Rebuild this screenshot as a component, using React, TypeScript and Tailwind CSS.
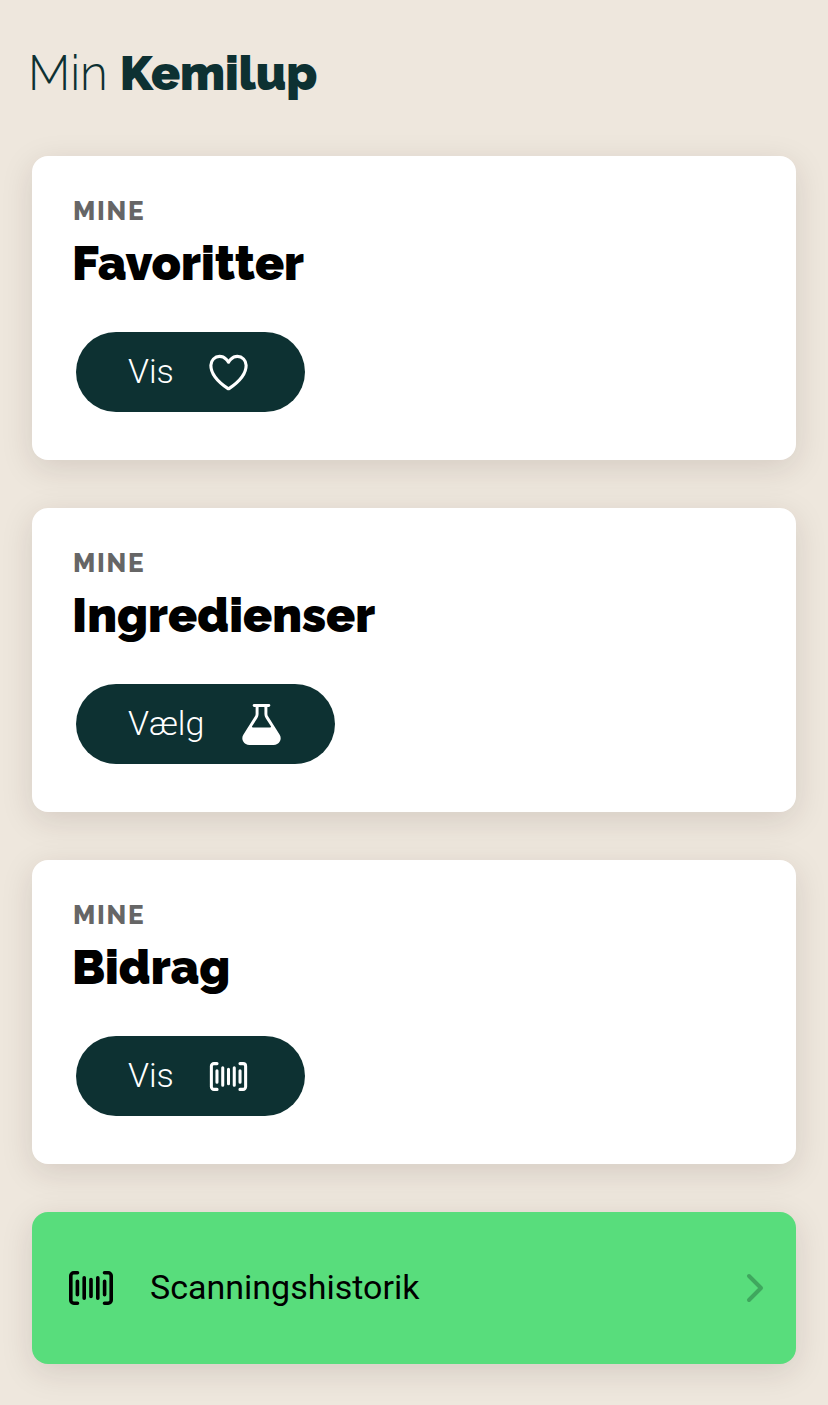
import React from "react";

interface MenuCardProps {
  title: string;
  action: string;
  icon: React.ReactNode;
}

const HeartIcon: React.FC = () => (
  <svg viewBox="0 0 512 512" className="mt-px -mr-[3.5px] -ml-[4.5px] h-[47px] w-[47px]" fill="none" stroke="currentColor" strokeWidth="34" strokeLinecap="round" strokeLinejoin="round">
    <path d="M352.92 80C288 80 256 144 256 144s-32-64-96.92-64c-52.76 0-94.54 44.14-95.08 96.81-1.1 109.33 86.73 187.08 183 252.42a16 16 0 0 0 18 0c96.26-65.34 184.09-143.09 183-252.42-.54-52.67-42.32-96.81-95.08-96.81z" />
  </svg>
);

const FlaskIcon: React.FC = () => (
  <svg viewBox="0 0 512 512" className="mt-px -mr-[5.5px] -ml-[2.5px] h-[47px] w-[47px]" fill="currentColor">
    <path d="M452.32 365 327.4 167.12A48.07 48.07 0 0 1 320 141.48V64h15.56c8.61 0 16-6.62 16.43-15.23A16 16 0 0 0 336 32H176.45c-8.61 0-16 6.62-16.43 15.23A16 16 0 0 0 176 64h16v77.48a47.92 47.92 0 0 1-7.41 25.63L59.68 365a74 74 0 0 0-2.5 76.44C70.26 465.51 96.07 480 123.88 480h264.24c27.81 0 53.62-14.49 66.7-38.56a74 74 0 0 0-2.5-76.44zM211.66 184.2A79.94 79.94 0 0 0 224 141.48V68a4 4 0 0 1 4-4h56a4 4 0 0 1 4 4v73.48a79.94 79.94 0 0 0 12.35 42.72l57.8 91.53a8 8 0 0 1-6.78 12.27H160.63a8 8 0 0 1-6.77-12.27z" />
  </svg>
);

const BarcodeIcon: React.FC<{ className: string }> = ({ className }) => (
  <svg viewBox="0 0 46 36" className={className} fill="none" stroke="currentColor" strokeWidth="3.6" strokeLinecap="round" strokeLinejoin="round">
    <path d="M9.5 2.8H5.8a3 3 0 0 0-3 3v24.4a3 3 0 0 0 3 3h3.7M36.5 2.8h3.7a3 3 0 0 1 3 3v24.4a3 3 0 0 1-3 3h-3.7M9.4 11.2v13.6M16.2 7.8v20.4M23 9.5v17M29.8 7.8v20.4M36.6 11.2v13.6" />
  </svg>
);

const MenuCard: React.FC<MenuCardProps> = ({ title, action, icon }) => {
  return (
    <section className="flex h-[304px] flex-col items-start rounded-2xl bg-white px-10 pt-[39px] shadow-[0_8px_32px_rgba(50,20,20,0.13)]">
      <p className="ml-px font-[Raleway,sans-serif] text-[26px] leading-8 font-extrabold tracking-[1.7px] text-[#666]">MINE</p>
      <h2 className="mt-2 font-[Raleway,sans-serif] text-[48px] leading-[56px] font-black text-black">{title}</h2>
      <button className="mt-[41px] ml-1 flex h-20 items-center gap-[37px] rounded-full bg-[#0d3132] pr-14 pl-[52px] font-[Roboto,sans-serif] text-[34px] font-light text-white">
        <span className="-mt-0.5 -mr-px">{action}</span>
        {icon}
      </button>
    </section>
  );
};

const App: React.FC = () => {
  return (
    <main className="min-h-[1405px] bg-[#eee7dd] px-8 pt-[43px] antialiased">
      <h1 className="-ml-1 h-[113px] font-[Raleway,sans-serif] text-[48px] leading-[60px] tracking-[-0.1px] text-[#0d3132]">
        <span className="font-[350]">Min</span> <span className="font-black">Kemilup</span>
      </h1>
      <div className="flex flex-col gap-12">
        <MenuCard title="Favoritter" action="Vis" icon={<HeartIcon />} />
        <MenuCard title="Ingredienser" action="Vælg" icon={<FlaskIcon />} />
        <MenuCard title="Bidrag" action="Vis" icon={<BarcodeIcon className="mt-px -ml-[0.5px] mr-[0.5px] h-[31px] w-[39px]" />} />
        <button className="flex h-[152px] items-center rounded-2xl bg-[#58dd7c] pr-[31px] pl-9 font-[Roboto,sans-serif] text-[34px] text-black shadow-[0_8px_32px_rgba(50,20,20,0.13)]">
          <BarcodeIcon className="-mt-px h-9 w-[46px]" />
          <span className="-mt-0.5 ml-9">Scanningshistorik</span>
          <svg viewBox="0 0 20 32" className="ml-auto h-8 w-5" fill="none" stroke="#3fa75e" strokeWidth="4" strokeLinecap="round" strokeLinejoin="round">
            <path d="M4 4l12 12L4 28" />
          </svg>
        </button>
      </div>
    </main>
  );
};

export default App;
